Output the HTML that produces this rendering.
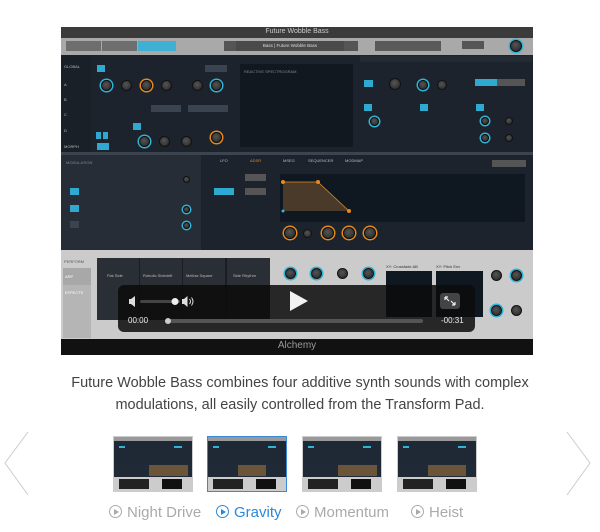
<!DOCTYPE html>
<html><head><meta charset="utf-8"><style>
*{margin:0;padding:0;box-sizing:border-box}
body{width:600px;height:532px;background:#fff;position:relative;overflow:hidden;font-family:"Liberation Sans",sans-serif}
.a{position:absolute}
.k{position:absolute;border-radius:50%;background:radial-gradient(circle at 45% 40%,#555,#222);border:1px solid #111}
.kb{box-shadow:0 0 0 1.5px #2fb3d6}
.ko{box-shadow:0 0 0 1.5px #e58a1f}
.t{position:absolute;font-size:4px;color:#bbb;white-space:nowrap}
.on{position:absolute;background:#2fa9cf;height:7px}
.bt{position:absolute;background:#3a4350;height:7px}
.cap{position:absolute;left:0;width:600px;text-align:center;font-size:14.5px;color:#444}
.lab{position:absolute;top:504px;font-size:15px;color:#aaa;white-space:nowrap}
.lab i{display:inline-block;width:13px;height:13px;border:1.3px solid currentColor;border-radius:50%;vertical-align:-1px;margin-right:5px;position:relative}
.lab i:after{content:"";position:absolute;left:4px;top:2.5px;border-left:5px solid currentColor;border-top:3.5px solid transparent;border-bottom:3.5px solid transparent}
.th{position:absolute;top:436px;width:80px;height:56px;background:#1f2a36;border:1px solid #ccc}
.th .u{position:absolute;left:0;right:0;top:0;height:4px;background:#999}
.th .m{position:absolute;left:1px;right:1px;top:4px;height:23px;background:#1e2935}
.th .e{position:absolute;left:35px;right:4px;top:28px;height:11px;background:#6b5538}
.th .b{position:absolute;left:0;right:0;top:40px;height:14px;background:#ccc}
.th .b2{position:absolute;left:5px;width:30px;top:42px;height:10px;background:#222}
.th .b3{position:absolute;left:48px;width:20px;top:42px;height:10px;background:#111}
.th .c{position:absolute;top:9px;height:2px;background:#2fb3d6}
</style></head><body>
<div class="a" style="left:61px;top:27px;width:472px;height:328px;background:#1c232c"></div>
<div class="a" style="left:61px;top:27px;width:472px;height:11px;background:#3b3b3b"></div>
<div class="a" style="left:61px;top:28px;width:472px;text-align:center;font-size:7px;color:#ccc">Future Wobble Bass</div>
<div class="a" style="left:61px;top:38px;width:472px;height:17px;background:#a9a9a9"></div>
<div class="a" style="left:66px;top:41px;width:35px;height:10px;background:#6e6e6e"></div>
<div class="a" style="left:102px;top:41px;width:35px;height:10px;background:#6e6e6e"></div>
<div class="a" style="left:138px;top:41px;width:38px;height:10px;background:#3fb0d4"></div>
<div class="a" style="left:224px;top:41px;width:134px;height:10px;background:#555"></div>
<div class="a" style="left:236px;top:41px;width:108px;height:10px;background:#4a4a4a;font-size:4.5px;color:#ddd;text-align:center;line-height:10px">Bass | Future Wobble Bass</div>
<div class="a" style="left:375px;top:41px;width:66px;height:10px;background:#5a5a5a"></div>
<div class="a" style="left:462px;top:41px;width:22px;height:8px;background:#555"></div>
<div class="k kb" style="left:510px;top:40px;width:12px;height:12px"></div>
<div class="a" style="left:61px;top:55px;width:30px;height:97px;background:#1a2028"></div>
<div class="t" style="left:64px;top:64px">GLOBAL</div>
<div class="t" style="left:64px;top:82px">A</div><div class="t" style="left:64px;top:97px">B</div><div class="t" style="left:64px;top:112px">C</div><div class="t" style="left:64px;top:128px">D</div><div class="t" style="left:64px;top:144px">MORPH</div>
<div class="on" style="left:97px;top:65px;width:8px"></div>
<div class="bt" style="left:205px;top:65px;width:22px"></div>
<div class="k kb" style="left:101px;top:80px;width:11px;height:11px"></div>
<div class="k" style="left:121px;top:80px;width:11px;height:11px"></div>
<div class="k ko" style="left:141px;top:80px;width:11px;height:11px"></div>
<div class="k" style="left:161px;top:80px;width:11px;height:11px"></div>
<div class="k" style="left:192px;top:80px;width:11px;height:11px"></div>
<div class="k kb" style="left:211px;top:80px;width:11px;height:11px"></div>
<div class="bt" style="left:151px;top:105px;width:30px"></div><div class="bt" style="left:188px;top:105px;width:40px"></div>
<div class="on" style="left:96px;top:132px;width:5px"></div><div class="on" style="left:103px;top:132px;width:5px"></div><div class="on" style="left:97px;top:143px;width:12px"></div>
<div class="on" style="left:133px;top:123px;width:8px"></div>
<div class="k kb" style="left:139px;top:136px;width:11px;height:11px"></div>
<div class="k" style="left:159px;top:136px;width:11px;height:11px"></div>
<div class="k" style="left:181px;top:136px;width:11px;height:11px"></div>
<div class="k ko" style="left:211px;top:132px;width:11px;height:11px"></div>
<div class="a" style="left:240px;top:64px;width:113px;height:83px;background:#111820"></div>
<div class="t" style="left:244px;top:69px;color:#888">REACTIVE SPECTROGRAM</div>
<div class="a" style="left:360px;top:56px;width:172px;height:6px;background:#222a34"></div>
<div class="on" style="left:364px;top:80px;width:9px"></div>
<div class="k" style="left:389px;top:78px;width:12px;height:12px"></div>
<div class="k kb" style="left:418px;top:80px;width:10px;height:10px"></div>
<div class="k" style="left:437px;top:80px;width:10px;height:10px"></div>
<div class="on" style="left:475px;top:79px;width:22px"></div><div class="bt" style="left:497px;top:79px;width:28px;background:#555"></div>
<div class="on" style="left:364px;top:104px;width:8px"></div><div class="on" style="left:420px;top:104px;width:8px"></div><div class="on" style="left:476px;top:104px;width:8px"></div>
<div class="k kb" style="left:370px;top:117px;width:9px;height:9px"></div>
<div class="k kb" style="left:481px;top:117px;width:8px;height:8px"></div><div class="k" style="left:505px;top:117px;width:8px;height:8px"></div>
<div class="k kb" style="left:481px;top:134px;width:8px;height:8px"></div><div class="k" style="left:505px;top:134px;width:8px;height:8px"></div>
<div class="a" style="left:61px;top:152px;width:472px;height:3px;background:#3b444f"></div>
<div class="a" style="left:61px;top:155px;width:140px;height:95px;background:#262d36"></div>
<div class="t" style="left:66px;top:160px;color:#888">MODULATION</div>
<div class="on" style="left:70px;top:188px;width:9px"></div><div class="on" style="left:70px;top:205px;width:9px"></div><div class="bt" style="left:70px;top:221px;width:9px"></div>
<div class="k" style="left:183px;top:176px;width:7px;height:7px"></div><div class="k kb" style="left:183px;top:206px;width:7px;height:7px"></div><div class="k kb" style="left:183px;top:222px;width:7px;height:7px"></div>
<div class="on" style="left:214px;top:188px;width:20px"></div><div class="bt" style="left:245px;top:188px;width:21px;background:#555"></div><div class="bt" style="left:245px;top:174px;width:21px;background:#555"></div>
<div class="t" style="left:220px;top:158px">LFO</div><div class="t" style="left:250px;top:158px;color:#e58a1f">ADSR</div><div class="t" style="left:283px;top:158px">MSEG</div><div class="t" style="left:308px;top:158px">SEQUENCER</div><div class="t" style="left:345px;top:158px">MODMAP</div>
<div class="a" style="left:492px;top:160px;width:34px;height:7px;background:#555"></div>
<div class="a" style="left:280px;top:174px;width:245px;height:48px;background:#0f1720"></div>
<svg class="a" style="left:280px;top:174px" width="245" height="48"><polygon points="3,8 38,8 69,37 3,37" fill="#4a3a2a"/><polyline points="3,8 38,8 69,37" fill="none" stroke="#e58a1f" stroke-width="0.8"/><circle cx="3" cy="8" r="2" fill="#e58a1f"/><circle cx="38" cy="8" r="2" fill="#e58a1f"/><circle cx="69" cy="37" r="2" fill="#e58a1f"/><circle cx="3" cy="37" r="1.5" fill="#2fb3d6"/></svg>
<div class="k ko" style="left:284px;top:227px;width:12px;height:12px"></div>
<div class="k" style="left:303px;top:229px;width:9px;height:9px"></div>
<div class="k ko" style="left:322px;top:227px;width:12px;height:12px"></div>
<div class="k ko" style="left:343px;top:227px;width:12px;height:12px"></div>
<div class="k ko" style="left:364px;top:227px;width:12px;height:12px"></div>
<div class="a" style="left:61px;top:250px;width:472px;height:90px;background:#cbcbcb"></div>
<div class="a" style="left:63px;top:268px;width:28px;height:17px;background:#a8a8a8"></div>
<div class="a" style="left:63px;top:285px;width:28px;height:53px;background:#b5b5b5"></div>
<div class="t" style="left:64px;top:259px;color:#555">PERFORM</div><div class="t" style="left:65px;top:274px;color:#fff">ARP</div><div class="t" style="left:65px;top:290px;color:#fff">EFFECTS</div>
<div class="a" style="left:97px;top:258px;width:173px;height:62px;background:linear-gradient(90deg,#2a2f36 0 42px,#1a1e24 42px 43px,#2a2f36 43px 85px,#1a1e24 85px 86px,#2a2f36 86px 128px,#1a1e24 128px 130px,#2a2f36 130px)"></div>
<div class="t" style="left:107px;top:273px">Flat Side</div><div class="t" style="left:143px;top:273px">Robotic Sidedrift</div><div class="t" style="left:186px;top:273px">Mellow Square</div><div class="t" style="left:233px;top:273px">Side Rhythm</div>
<div class="k kb" style="left:285px;top:268px;width:11px;height:11px"></div><div class="k kb" style="left:311px;top:268px;width:11px;height:11px"></div><div class="k" style="left:337px;top:268px;width:11px;height:11px"></div><div class="k kb" style="left:363px;top:268px;width:11px;height:11px"></div>
<div class="t" style="left:386px;top:264px;color:#333">XY: Crossfade AB</div><div class="t" style="left:436px;top:264px;color:#333">XY: Pitch Env</div>
<div class="a" style="left:386px;top:271px;width:46px;height:46px;background:#0f1720"></div>
<div class="a" style="left:436px;top:271px;width:47px;height:46px;background:#0f1720"></div>
<div class="k" style="left:491px;top:270px;width:11px;height:11px"></div><div class="k kb" style="left:511px;top:270px;width:11px;height:11px"></div>
<div class="k kb" style="left:491px;top:305px;width:11px;height:11px"></div><div class="k" style="left:511px;top:305px;width:11px;height:11px"></div>
<div class="a" style="left:61px;top:339px;width:472px;height:16px;background:#111"></div>
<div class="a" style="left:61px;top:340px;width:472px;text-align:center;font-size:10px;color:#999">Alchemy</div>
<div class="a" style="left:118px;top:285px;width:357px;height:47px;background:rgba(12,12,12,0.86);border-radius:6px"></div>
<svg class="a" style="left:126px;top:295px" width="70" height="14"><rect x="3" y="4" width="3" height="5" fill="#ddd"/><polygon points="5,4 9,1 9,12 5,9" fill="#ddd"/><rect x="14" y="5" width="40" height="3" rx="1.5" fill="#444"/><circle cx="49" cy="6.5" r="3.5" fill="#eee"/><rect x="56" y="4" width="2.5" height="5" fill="#ddd"/><polygon points="58,4 61.5,1 61.5,12 58,9" fill="#ddd"/><path d="M63.5 4 q2 2.5 0 5 M65.5 2.5 q3 4 0 8" stroke="#ddd" fill="none"/></svg>
<svg class="a" style="left:288px;top:290px" width="22" height="22"><polygon points="2,1 20,11 2,21" fill="#f2f2f2"/></svg>
<div class="a" style="left:440px;top:293px;width:20px;height:16px;background:#444;border-radius:3px"></div>
<svg class="a" style="left:444px;top:296px" width="12" height="10"><path d="M1 1 L5 5 M1 1 h3 M1 1 v3 M11 9 L7 5 M11 9 h-3 M11 9 v-3" stroke="#eee" stroke-width="1.2" fill="none"/></svg>
<div class="a" style="left:128px;top:316px;font-size:8px;color:#eee">00:00</div>
<div class="a" style="left:165px;top:319px;width:258px;height:4px;background:#555;border-radius:2px"></div>
<div class="a" style="left:165px;top:318px;width:6px;height:6px;background:#ccc;border-radius:50%"></div>
<div class="a" style="left:441px;top:316px;font-size:8px;color:#eee">-00:31</div>
<div class="cap" style="top:375px">Future Wobble Bass combines four additive synth sounds with complex</div>
<div class="cap" style="top:397px">modulations, all easily controlled from the Transform Pad.</div>
<svg class="a" style="left:3px;top:431px" width="26" height="65"><polyline points="25,1 2,32 25,64" fill="none" stroke="#ccc" stroke-width="1"/></svg>
<svg class="a" style="left:566px;top:431px" width="26" height="65"><polyline points="1,1 24,32 1,64" fill="none" stroke="#ccc" stroke-width="1"/></svg>
<div class="th" style="left:113px"><div class="u"></div><div class="m"></div><div class="c" style="left:5px;width:6px"></div><div class="c" style="left:60px;width:8px"></div><div class="e"></div><div class="b"></div><div class="b2"></div><div class="b3"></div></div>
<div class="th" style="left:207px;border:1.5px solid #3a8ad8"><div class="u"></div><div class="m"></div><div class="c" style="left:5px;width:6px"></div><div class="c" style="left:60px;width:8px"></div><div class="e" style="left:30px;right:20px"></div><div class="b"></div><div class="b2"></div><div class="b3"></div></div>
<div class="th" style="left:302px"><div class="u"></div><div class="m"></div><div class="c" style="left:5px;width:6px"></div><div class="c" style="left:60px;width:8px"></div><div class="e"></div><div class="b"></div><div class="b2"></div><div class="b3"></div></div>
<div class="th" style="left:397px"><div class="u"></div><div class="m"></div><div class="c" style="left:5px;width:6px"></div><div class="c" style="left:60px;width:8px"></div><div class="e" style="left:30px;right:10px"></div><div class="b"></div><div class="b2"></div><div class="b3"></div></div>
<div class="lab" style="left:109px"><i></i>Night Drive</div>
<div class="lab" style="left:216px;color:#2a88db"><i></i>Gravity</div>
<div class="lab" style="left:296px"><i></i>Momentum</div>
<div class="lab" style="left:411px"><i></i>Heist</div>
</body></html>
